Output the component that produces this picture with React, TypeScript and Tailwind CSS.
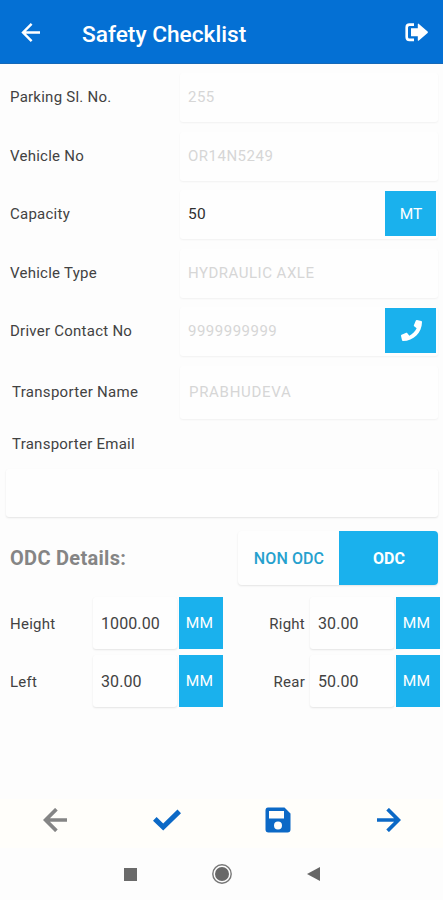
import React from "react";
import { FaPhone } from "react-icons/fa";

const fieldShadow = "shadow-[0_1px_2px_rgba(0,0,0,0.05)]";
const strongShadow = "shadow-[0_1px_2px_rgba(0,0,0,0.1)]";

function ArrowLeft({ className, weight = 3.7 }: { className: string; weight?: number }) {
  return (
    <svg viewBox="0 0 24 24" className={className} fill="none" stroke="currentColor" strokeWidth={weight}>
      <path d="M13.4 1.2 2.6 12l10.8 10.8M3 12h21" />
    </svg>
  );
}

function SignOut() {
  return (
    <svg viewBox="0 0 23 19" className="mt-[2px] h-[19px] w-[23px]">
      <path d="M9 1.600H4.500Q1.700 1.600 1.700 4.500V14Q1.700 16.900 4.500 16.900H9" fill="none" stroke="currentColor" strokeWidth="2.600" />
      <path d="M6 5.200H12.800V1.200Q13 .2 13.900.9L22.600 8.500Q23.200 9.200 22.600 9.900L13.900 17.500Q13 18.200 12.800 17.200V13.300H6Z" fill="currentColor" />
    </svg>
  );
}

function Row({
  label,
  value,
  disabled = true,
  action,
}: {
  label: string;
  value: string;
  disabled?: boolean;
  action?: React.ReactNode;
}) {
  return (
    <div className="flex h-[49px] items-center pl-[10px] pr-[5px]">
      <div className="w-[170px] text-[15px] tracking-[0.25px] text-[#424242]">{label}</div>
      <div className={`flex h-full flex-1 items-center justify-between rounded-[3px] bg-[#fefefe] pl-2 pr-[2px] ${fieldShadow}`}>
        <span className={disabled ? "text-[15px] tracking-[0.5px] text-[#d6d6d6]" : "text-[15.5px] tracking-[0.3px] text-[#303030]"}>{value}</span>
        {action}
      </div>
    </div>
  );
}

function Measure({ value }: { value: string }) {
  return (
    <div className="flex h-[52px]">
      <div className={`mr-[2px] flex w-[84px] items-center rounded-[3px] bg-[#fefefe] pl-[8px] pt-[2px] text-[16px] tracking-[0.1px] text-[#424242] ${strongShadow}`}>
        {value}
      </div>
      <div className="flex w-[44px] items-center justify-center bg-[#1ab1ed] pr-[3px] pt-[2px] text-[15.5px] text-white">MM</div>
    </div>
  );
}

export default function App() {
  return (
    <div className="flex h-[900px] w-[443px] flex-col overflow-hidden bg-[#fdfdfd] font-['Roboto',sans-serif] leading-none">
      <header className="flex h-16 shrink-0 items-center border-b border-[#1569b8] bg-[#0470d4] pl-[21px] pr-[15px] text-white">
        <ArrowLeft className="mt-px h-[19px] w-[19px]" weight={3.1} />
        <h1 className="ml-[42px] mt-[7px] flex-1 text-[22.7px] font-medium">Safety Checklist</h1>
        <SignOut />
      </header>

      <section className="flex h-[293px] shrink-0 flex-col gap-[9.6px] pt-[9px]">
        <Row label="Parking Sl. No." value="255" />
        <Row label="Vehicle No" value="OR14N5249" />
        <Row
          label="Capacity"
          value="50"
          disabled={false}
          action={<button className="mb-[2px] h-[45px] w-[51px] bg-[#1ab1ed] pt-[2px] pl-px text-[15.5px] text-white">MT</button>}
        />
        <Row label="Vehicle Type" value="HYDRAULIC AXLE" />
        <Row
          label="Driver Contact No"
          value="9999999999"
          action={
            <button className="mb-[2px] flex h-[45px] w-[51px] items-center justify-center bg-[#1ab1ed] pl-[2px] text-white">
              <FaPhone className="h-[21px] w-[21px]" />
            </button>
          }
        />
      </section>

      <section className="shrink-0 pl-3 pr-[5px] pt-[9px]">
        <div className="flex h-[53px] items-center text-[15px]">
          <div className="w-[168px] tracking-[0.3px] text-[#424242]">Transporter Name</div>
          <div className={`flex h-full flex-1 items-center rounded-[3px] bg-[#fefefe] pl-[9px] tracking-[0.7px] text-[#d6d6d6] ${fieldShadow}`}>
            PRABHUDEVA
          </div>
        </div>
        <div className="mt-[17px] h-[33px] pt-px text-[15px] tracking-[0.25px] text-[#424242]">Transporter Email</div>
        <div className={`-ml-[6px] h-[48px] rounded-[3px] bg-[#fefefe] ${strongShadow}`} />
      </section>

      <section className="mt-[14px] flex h-[54px] shrink-0 items-center pl-[10px] pr-[5px]">
        <h2 className="flex-1 text-[20px] font-bold tracking-[0.3px] text-[#858585]">ODC Details:</h2>
        <div className={`flex h-full w-[200px] overflow-hidden rounded-[4px] bg-[#fefefe] text-[16px] ${strongShadow}`}>
          <button className="w-[101px] pl-px pt-[2px] font-medium tracking-[0.1px] text-[#26a1ce]">NON ODC</button>
          <button className="flex-1 bg-[#1ab1ed] pl-px pt-[2px] font-bold text-white">ODC</button>
        </div>
      </section>

      <section className="mt-3 grid shrink-0 grid-cols-[84px_130px_87px_130px] items-center gap-y-[6px] pl-[9px] text-[15px] tracking-[0.25px] text-[#424242]">
        <span className="pl-px pt-[2px]">Height</span>
        <Measure value="1000.00" />
        <span className="pr-[5px] pt-[2px] text-right">Right</span>
        <Measure value="30.00" />
        <span className="pl-px pt-[2px]">Left</span>
        <Measure value="30.00" />
        <span className="pr-[5px] pt-[2px] text-right">Rear</span>
        <Measure value="50.00" />
      </section>

      <footer className="mt-auto h-[101px] shrink-0">
        <nav className="grid h-[49px] grid-cols-4 items-center justify-items-center bg-[#fffefa] pb-[8px] text-[#0c69c6]">
          <ArrowLeft className="h-6 w-6 text-[#858585]" />
          <svg viewBox="0 0 28 22" className="ml-px h-[22px] w-7" fill="none" stroke="currentColor" strokeWidth="5.2">
            <path d="M1.8 9.900 10.2 18 26.3 2.4" />
          </svg>
          <svg viewBox="0 0 26 26" className="ml-[2px] h-[26px] w-[26px]" fill="currentColor" fillRule="evenodd">
            <path d="M3 .5h16.5l6 6V22.500q0 3-3 3H3.500q-3 0-3-3V3.500q0-3 2.500-3ZM4 4v7.500h15V4ZM13 14.500a4 4 0 1 0 0 8a4 4 0 0 0 0-8Z" />
          </svg>
          <ArrowLeft className="ml-[2px] h-6 w-6 rotate-180" />
        </nav>
        <div className="flex h-[52px] items-center justify-center gap-[75px]">
          <div className="h-[13px] w-[13px] bg-[#6a6a6a]" />
          <svg viewBox="0 0 20 20" className="h-5 w-5">
            <circle cx="10" cy="10" r="9.200" fill="none" stroke="#777" strokeWidth="1.400" />
            <circle cx="10" cy="10" r="7" fill="#686868" />
          </svg>
          <svg viewBox="0 0 13 14" className="h-[14px] w-[13px]" fill="#666">
            <path d="M0 7 13 0v14Z" />
          </svg>
        </div>
      </footer>
    </div>
  );
}
